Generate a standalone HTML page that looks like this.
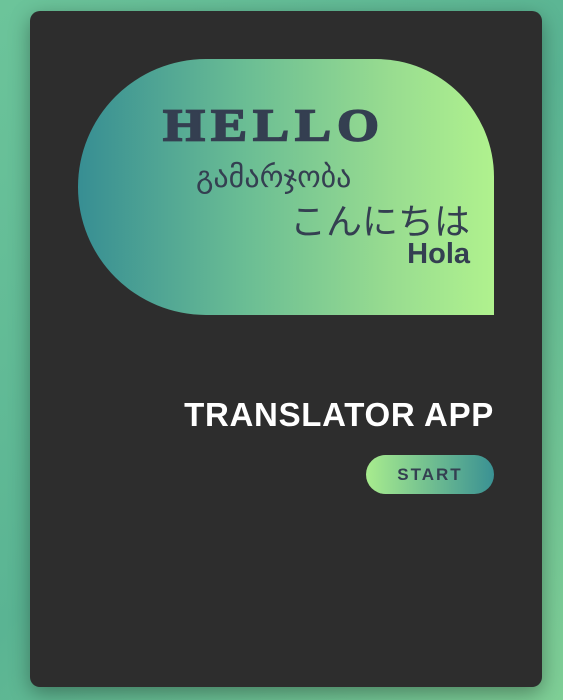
<!DOCTYPE html>
<html><head><meta charset="utf-8"><style>
html,body{margin:0;padding:0;}
body{width:563px;height:700px;background:linear-gradient(135deg,#6cc49a,#5ab493 50%,#7fcf96);overflow:hidden;position:relative;font-family:"Liberation Sans","Noto Sans CJK JP",sans-serif;}
.card{position:absolute;left:30px;top:11px;width:512px;height:676px;background:#2d2d2d;border-radius:10px;box-shadow:0 6px 20px rgba(0,0,0,.35);}
.blob{position:absolute;left:48px;top:48px;width:416px;height:256px;border-radius:128px 118px 0 128px;background:linear-gradient(90deg,#378e93 0%,#6abd94 40%,#98dc90 75%,#b0f28e 100%);color:#343f51;}
.hello{position:absolute;left:85px;top:44px;font-family:"Liberation Serif",serif;font-weight:bold;font-size:54px;letter-spacing:6px;transform:scaleY(0.85);transform-origin:top left;line-height:52px;-webkit-text-stroke:2px #343f51;}
.geo{position:absolute;left:118px;top:102px;font-size:30px;font-family:"DejaVu Sans",sans-serif;line-height:34px;}
.jp{position:absolute;right:24px;top:139px;font-size:36px;line-height:42px;font-family:"Noto Sans CJK JP",sans-serif;}
.hola{position:absolute;right:24px;top:179px;font-size:29px;font-weight:bold;line-height:32px;}
.title{position:absolute;right:48px;top:384px;color:#fff;font-weight:bold;font-size:33px;letter-spacing:0.7px;line-height:40px;}
.btn{position:absolute;left:336px;top:444px;width:128px;height:39px;border-radius:20px;background:linear-gradient(90deg,#a8ec8e,#3a9193);color:#343f51;font-weight:bold;font-size:17px;letter-spacing:2px;text-align:center;line-height:39px;}
</style></head><body>
<div class="card">
<div class="blob">
<div class="hello">HELLO</div>
<div class="geo">გამარჯობა</div>
<div class="jp">こんにちは</div>
<div class="hola">Hola</div>
</div>
<div class="title">TRANSLATOR APP</div>
<div class="btn">START</div>
</div>
</body></html>
